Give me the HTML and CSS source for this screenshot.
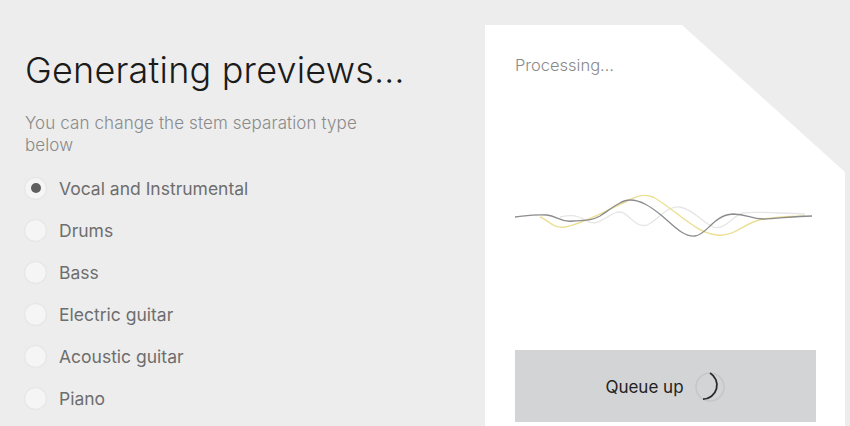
FILE: index.html
```html
<!DOCTYPE html>
<html lang="en">
<head>
  <meta charset="UTF-8">
  <title>Generating previews</title>
  <link rel="stylesheet" href="styles.css">
</head>
<body>

  <div class="left">
    <h1>Generating previews…</h1>
    <p class="hint">You can change the stem separation type below</p>

    <div class="options">
      <label class="option"><span class="radio checked"></span>Vocal and Instrumental</label>
      <label class="option"><span class="radio"></span>Drums</label>
      <label class="option"><span class="radio"></span>Bass</label>
      <label class="option"><span class="radio"></span>Electric guitar</label>
      <label class="option"><span class="radio"></span>Acoustic guitar</label>
      <label class="option"><span class="radio"></span>Piano</label>
    </div>
  </div>

  <div class="card">
    <div class="status">Processing…</div>

    <svg class="wave" width="301" height="70" viewBox="0 0 301 70">
      <path d="M45 34 C55 32 60 31 72 38 C82 44 90 34 100 30 C112 24 118 46 132 42 C142 38 152 22 165 24 C178 26 188 40 198 44 C210 48 218 32 228 30 C240 28 260 30 290 31" fill="none" stroke="#e6e6e6" stroke-width="1.3"/>
      <path d="M25 34 C32 36 38 46 50 44 C70 40 90 28 110 19 C120 14 128 10 138 14 C160 26 180 50 202 52 C220 54 228 40 248 36 C262 34 275 33 290 33" fill="none" stroke="#ebdf93" stroke-width="1.4"/>
      <path d="M0 34 C10 33 20 31 32 32 C42 33 46 40 58 38 C70 37 76 38 85 33 C96 26 106 17 115 17 C126 17 136 24 146 32 C158 42 168 54 180 53 C192 52 198 32 218 31 C232 31 236 36 248 36 C262 36 278 33 297 33" fill="none" stroke="#8c8c8c" stroke-width="1.3"/>
    </svg>

    <button class="queue">
      Queue up
      <svg class="spinner" width="32" height="32" viewBox="0 0 32 32">
        <circle cx="16" cy="16" r="14" fill="none" stroke="#c6c7c9" stroke-width="1.6"/>
        <path d="M16 2 A14 14 0 0 1 9 28.1" fill="none" stroke="#2a2a2a" stroke-width="1.8"/>
      </svg>
    </button>
  </div>

</body>
</html>
```

FILE: styles.css
```css
body {
  margin: 0;
  background: #ededed;
  font-family: Inter, "Open Sans", sans-serif;
  display: flex;
  height: 426px;
  overflow: hidden;
}

.left {
  width: 460px;
  padding-left: 25px;
}

h1 {
  margin: 46px 0 0;
  font-size: 36px;
  font-weight: 300;
  color: #1b1b1b;
  letter-spacing: 0.2px;
  line-height: 48px;
}

.hint {
  margin: 18px 0 0;
  width: 350px;
  font-size: 17px;
  font-weight: 300;
  letter-spacing: 0.1px;
  line-height: 22px;
  color: #8a8a8a;
}

.options {
  display: flex;
  flex-direction: column;
  margin-top: 11px;
}

.option {
  display: flex;
  align-items: center;
  height: 42px;
  gap: 13px;
  font-size: 17.5px;
  color: #6e6e6e;
}

.radio {
  width: 21px;
  height: 21px;
  border-radius: 50%;
  background: #f5f5f5;
  box-shadow: 0 0 2px rgba(0, 0, 0, 0.12);
  display: flex;
  align-items: center;
  justify-content: center;
}

.radio.checked::after {
  content: "";
  width: 10px;
  height: 10px;
  border-radius: 50%;
  background: #5f5f5f;
}

.card {
  margin-top: 25px;
  width: 301px;
  height: 420px;
  padding: 0 29px 0 30px;
  background: #fff;
  clip-path: polygon(0 0, 197px 0, 360px 147px, 360px 100%, 0 100%);
}

.status {
  margin-top: 30px;
  font-size: 16.5px;
  font-weight: 300;
  color: #8a8a8a;
}

.wave {
  display: block;
  margin-top: 108px;
}

.queue {
  margin-top: 97px;
  padding-top: 3px;
  width: 301px;
  height: 72px;
  border: none;
  background: #d3d4d6;
  font-family: inherit;
  font-size: 17px;
  color: #222;
  display: flex;
  align-items: center;
  justify-content: center;
  gap: 10px;
}

.spinner {
  display: block;
}
```
